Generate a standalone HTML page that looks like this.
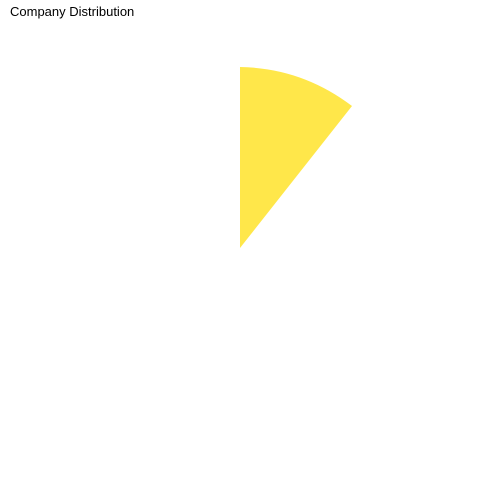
<!DOCTYPE html>
<html><head><style>
html,body{margin:0;padding:0;background:#fff;width:480px;height:480px;overflow:hidden}
.t{position:absolute;left:10px;top:4px;font:13px "Liberation Sans",sans-serif;color:#000}
svg{position:absolute;left:0;top:0}
</style></head><body>
<div class="t">Company Distribution</div>
<svg width="480" height="480"><path d="M240,248 L240,67 Q302,68 352,106 Z" fill="#FFE74A"/></svg>
</body></html>
